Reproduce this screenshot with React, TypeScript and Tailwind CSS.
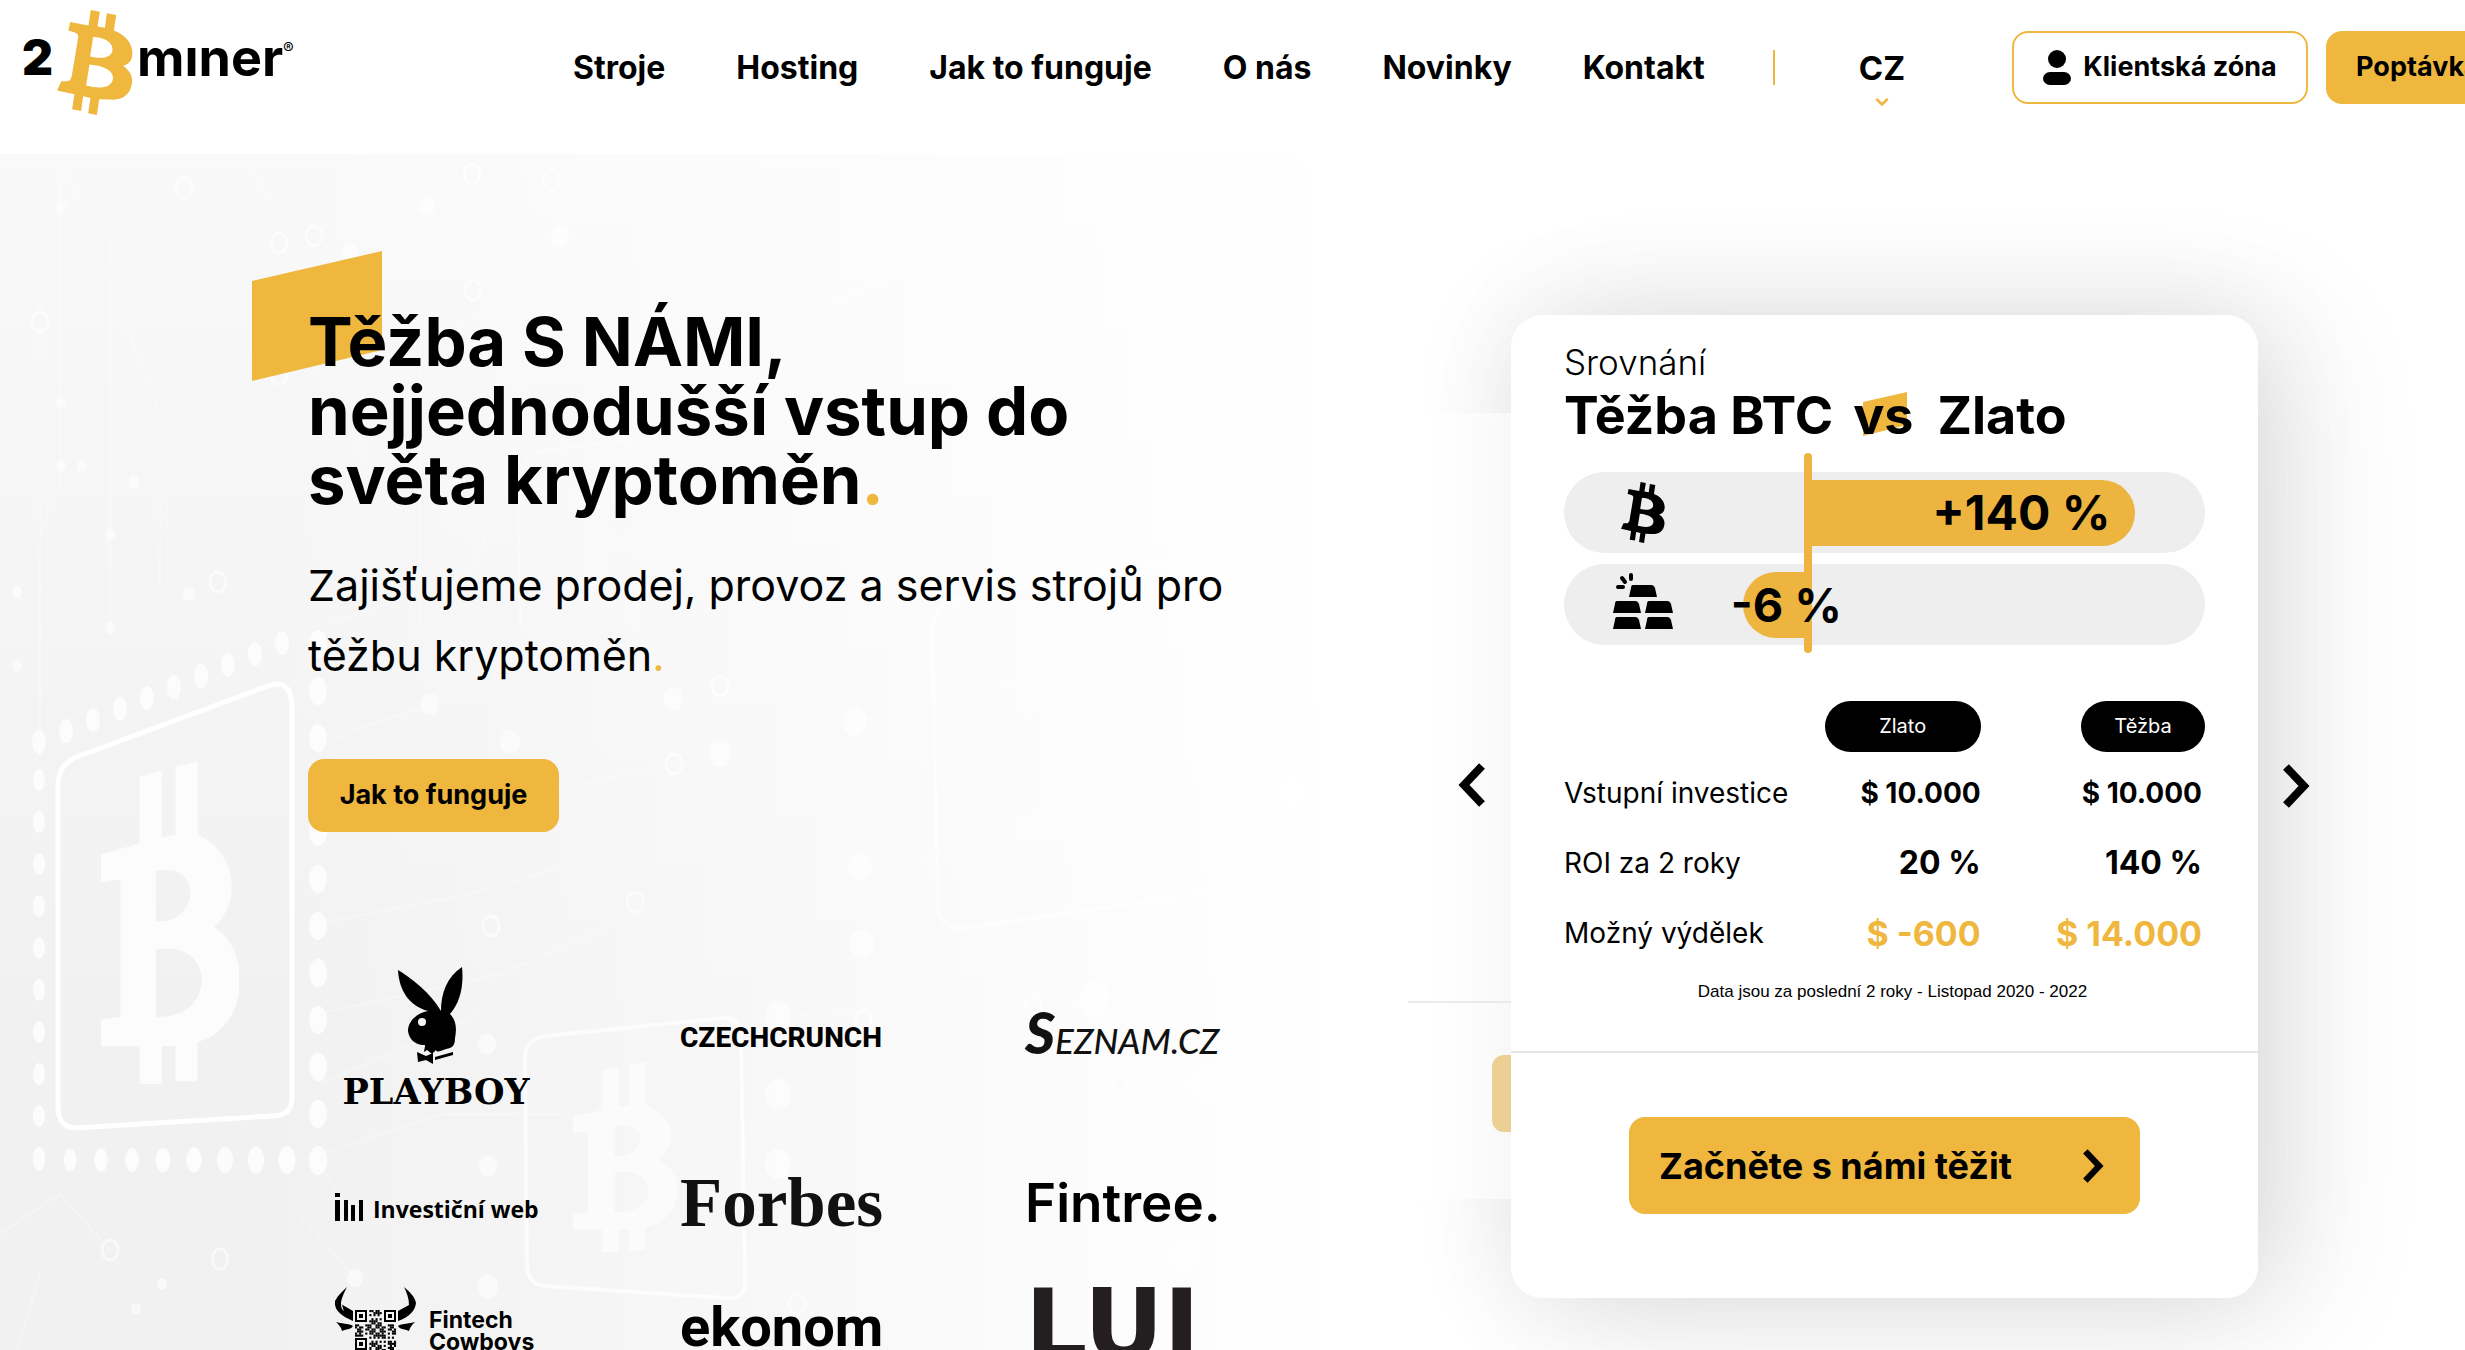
import { FiChevronDown } from "react-icons/fi";

const NAV_ITEMS = ["Stroje", "Hosting", "Jak to funguje", "O nás", "Novinky", "Kontakt"];

const COMPARISON = [
    { label: "Vstupní investice", gold: "$ 10.000", mining: "$ 10.000", style: "text-[28px] text-black" },
    { label: "ROI za 2 roky", gold: "20 %", mining: "140 %", style: "text-[32px] text-black" },
    { label: "Možný výdělek", gold: "$ -600", mining: "$ 14.000", style: "text-[34px] text-[#efb73e]" },
];

const B_PATH =
    "M179 93L184 67L239 77L246 31L273 36L266 80L288 84L294 41L322 46L315 92C352 106 373 134 370 166C368 184 360 192 342 198C362 212 372 228 369 250C364 285 340 302 300 299L271 298L264 345L238 340L245 294L223 289L217 333L190 328L197 283L145 272L158 244L172 244C182 244 187 238 189 228L208 115C210 104 206 98 179 93Z" +
    "M253 112C285 112 312 128 311 150C309 176 275 178 244 170ZM242 194C290 198 316 215 312 238C307 265 270 268 232 257Z";

function BitcoinMark({ className }: { className?: string }) {
    return (
        <svg viewBox="145 31 227 314" className={className} fill="currentColor" fillRule="evenodd" aria-hidden="true">
            <path d={B_PATH} />
        </svg>
    );
}

function Chevron({ className, left }: { className?: string; left?: boolean }) {
    return (
        <svg viewBox="0 0 27 44" className={className} fill="none" stroke="currentColor" strokeWidth="8" aria-hidden="true">
            <path d={left ? "M24 3L6 22L24 41" : "M3 3L21 22L3 41"} />
        </svg>
    );
}

// upright coin sign used inside the background chips
function ChipSign({ x, y, w, h, opacity }: { x: number; y: number; w: number; h: number; opacity: number }) {
    return (
        <svg x={x} y={y} width={w} height={h} viewBox="0 0 100 230" preserveAspectRatio="none" opacity={opacity}>
            <path
                fill="#fff"
                fillRule="evenodd"
                d="M0 66L28 58V10L44 6V54L54 52V3L70 0V52C96 62 104 98 82 118C110 134 108 190 70 200V228H54V203H44V230H28V203H0V184L14 182V84L0 86ZM40 78V114C72 116 74 70 40 78ZM40 134V182C84 184 84 126 40 134Z"
            />
        </svg>
    );
}

function Backdrop() {
    const left = Array.from({ length: 10 }, (_, i) => 626 + i * 42);
    const right = Array.from({ length: 12 }, (_, i) => 490 + i * 47);
    const top = Array.from({ length: 10 }, (_, i) => i);
    const scattered = [
        [61, 54, 5], [427, 52, 8], [560, 82, 9], [350, 98, 8], [61, 248, 5], [61, 312, 5], [134, 328, 6], [110, 380, 5],
        [82, 312, 5], [189, 440, 6], [110, 474, 5], [430, 550, 9], [510, 588, 10], [673, 545, 10], [720, 600, 11],
        [855, 568, 12], [860, 712, 12], [862, 790, 12], [487, 890, 9], [487, 935, 9], [778, 862, 13], [778, 940, 13],
        [778, 1010, 13], [488, 1012, 9], [488, 1132, 10], [355, 1124, 8], [162, 1130, 5], [136, 1155, 5], [1095, 845, 15],
        [1205, 930, 16], [1185, 1100, 14], [1340, 550, 15], [17, 438, 5], [17, 512, 5], [1290, 640, 12],
    ];
    const rings = [
        [184, 34], [472, 20], [551, 26], [279, 89], [314, 82], [473, 136], [279, 220], [218, 428], [720, 532], [674, 610],
        [635, 748], [491, 772], [863, 866], [1033, 850], [1120, 928], [220, 1105], [110, 1096], [40, 168], [797, 1150],
    ];
    const wires = [
        "M0 640L40 600V120", "M60 0V330L40 380V588", "M110 50V480", "M318 1000L440 960H560", "M318 860L500 820L640 760",
        "M318 770L470 740L640 690", "M318 680L490 650L720 600", "M320 930L480 860", "M318 590L430 550L560 470",
        "M320 1010L350 1060H487", "M330 470L470 420L520 300V120", "M780 862L1100 850L1240 900", "M860 712L1010 690",
        "M855 568L1040 520L1300 400", "M61 0L160 260V430", "M560 82L500 150L420 190V470", "M0 1080L60 1040L110 1096",
        "M17 1196L40 1120", "M355 1124L300 1060", "M240 0L360 180V420", "M720 200L900 120L1100 160",
    ];
    return (
        <svg className="absolute left-0 top-0" width="1500" height="1196" viewBox="0 0 1500 1196" aria-hidden="true">
            <g fill="none" stroke="#fff" strokeWidth="2" opacity="0.3">
                {wires.map((d) => <path key={d} d={d} />)}
            </g>
            <g fill="#fff" opacity="0.8">
                {left.map((y) => <ellipse key={y} cx="39" cy={y} rx="6" ry="11" />)}
                {right.map((y) => <ellipse key={y} cx="318" cy={y} rx="9" ry="14" />)}
                {top.map((i) => <ellipse key={i} cx={39 + i * 27} cy={588 - i * 11} rx="7" ry="12" />)}
                {top.map((i) => <ellipse key={i} cx={39 + i * 31} cy="1006" rx={6 + i / 3} ry={11 + i / 3} />)}
            </g>
            <g fill="#fff" opacity="0.6">
                {scattered.map(([x, y, r]) => <ellipse key={`${x}-${y}`} cx={x} cy={y} rx={r} ry={r * 1.2} />)}
            </g>
            <g fill="none" stroke="#fff" strokeWidth="3">
                {rings.map(([x, y]) => <ellipse key={`${x}-${y}`} cx={x} cy={y} rx="8" ry="10" opacity="0.6" />)}
                <path strokeWidth="5" d="M74 604L268 532Q290 524 292 550V944Q292 962 272 962L76 974Q58 974 58 952V632Q58 612 74 604Z" />
                <path strokeWidth="4" opacity="0.7" d="M545 882L724 864Q740 864 741 882L745 1128Q745 1146 726 1144L545 1132Q528 1130 527 1112L525 902Q526 886 545 882Z" />
                <path strokeWidth="4" opacity="0.5" d="M955 446L1258 390Q1284 386 1285 412L1292 700Q1292 726 1266 730L966 774Q940 776 938 752L932 480Q932 452 955 446Z" />
                <path opacity="0.3" d="M520 470V330Q520 300 548 296L650 284" />
            </g>
            <ChipSign x={101} y={608} w={138} h={322} opacity={0.8} />
            <ChipSign x={573} y={908} w={104} h={190} opacity={0.6} />
            <ChipSign x={1018} y={470} w={165} h={240} opacity={0.4} />
            <ChipSign x={570} y={286} w={100} h={190} opacity={0.2} />
        </svg>
    );
}

function Header() {
    return (
        <header className="relative flex h-[154px] items-start whitespace-nowrap bg-white pl-[22px]">
            <a href="#" aria-label="2Bminer" className="flex w-[276px] shrink-0 items-start pt-2.5 text-black">
                <span className="pt-5 pr-1 text-[48px] leading-[56px] font-black">2</span>
                <BitcoinMark className="h-[105px] w-[76px] shrink-0 text-[#efb73e]" />
                <span className="pt-4 pl-1 text-[52px] leading-[64px] font-bold">mıner</span>
                <span className="pt-7 text-base leading-5">®</span>
            </a>
            <nav className="ml-[275px] flex shrink-0 gap-[71px] pt-12 text-[32px] leading-10 font-bold">
                {NAV_ITEMS.map((item) => <a key={item} href="#">{item}</a>)}
            </nav>
            <div className="mt-[50px] ml-[68px] h-[35px] w-0.5 shrink-0 bg-[#efb73e]" />
            <button className="ml-[84px] flex shrink-0 flex-col items-center pt-12 text-[33px] leading-10 font-bold">
                CZ
                <FiChevronDown className="mt-1 size-5 stroke-3 text-[#efb73e]" />
            </button>
            <a href="#" className="mt-[31px] ml-[107px] flex h-[73px] w-[296px] shrink-0 items-center justify-center gap-3 rounded-2xl border-2 border-[#efb73e] text-[27px] font-bold">
                <svg viewBox="0 0 28 36" className="h-9 w-7" aria-hidden="true">
                    <ellipse cx="14" cy="9" rx="9" ry="9" />
                    <rect y="22" width="28" height="13" rx="7" />
                </svg>
                Klientská zóna
            </a>
            <a href="#" className="mt-[31px] ml-[18px] flex h-[73px] w-[230px] shrink-0 items-center rounded-2xl bg-[#efb73e] pl-[30px] text-[27px] font-bold">
                Poptávka
            </a>
        </header>
    );
}

function PlayboyLogo() {
    return (
        <div className="flex h-[140px] flex-col items-center">
            <svg viewBox="0 0 66 100" className="mr-3 h-[100px] w-[66px] shrink-0" aria-hidden="true">
                <path d="M1 4C14 12 34 27 44 45C44 27 50 11 65 1C67 20 63 37 53 48C59 54 60 62 58 72C58 79 56 82 49 83C43 85 40 87 39 84L35 88L30 84L27 86C27 84 28 82 28 79C20 80 12 74 11 65C11 55 20 47 31 45C12 40 2 24 1 4Z" />
                <circle cx="25" cy="56" r="4" fill="#f3f3f3" />
                <path d="M20 86L29 90L36 87V98L29 94L21 96Z" />
                <path d="M38 91L56 86V89L38 94Z" />
            </svg>
            <span className="pt-1 font-['DejaVu_Serif'] text-[35px] leading-[44px] font-bold">PLAYBOY</span>
        </div>
    );
}

function InvesticniLogo() {
    return (
        <div className="flex items-end gap-2.5 pt-6">
            <svg viewBox="0 0 28 28" className="mb-1 h-7 w-7 shrink-0" aria-hidden="true">
                <rect width="5" height="4" />
                <rect y="7" width="5" height="21" />
                <rect x="9" y="7" width="4" height="21" />
                <rect x="16" y="12" width="4" height="16" />
                <rect x="24" y="7" width="4" height="21" />
            </svg>
            <span className="font-['Open_Sans'] text-[23px] leading-8 font-bold whitespace-nowrap">Investiční web</span>
        </div>
    );
}

function CowboysLogo() {
    const cells = Array.from({ length: 400 }, (_, i) => i).filter((i) => {
        const x = i % 20;
        const y = Math.floor(i / 20);
        if (y < 7 && (x < 7 || x > 12)) return false;
        if (y > 12 && x < 7) return false;
        return (x * 7 + y * 13 + x * y * 5) % 11 < 6;
    });
    return (
        <div className="flex w-full gap-3">
            <svg viewBox="0 0 82 90" className="h-[90px] w-[82px] shrink-0" aria-hidden="true">
                <path d="M12 0C8 8 4 16 7 22L18 34V24L6 17L18 27L18 34C4 28 -1 22 0 14C3 8 8 4 12 0Z" />
                <path d="M7 18L18 25V34L10 28Z" />
                <path d="M69 0C75 5 80 10 81 16C80 24 74 30 63 34V24L74 18C74 12 72 6 69 0Z" />
                <path d="M1 35C6 37 14 36 18 39C16 43 10 42 7 44C6 40 4 38 1 35ZM80 35C75 37 67 36 63 39C65 43 71 42 74 44C75 40 77 38 80 35Z" />
                <g transform="translate(20 23)">
                    {cells.map((i) => <rect key={i} x={(i % 20) * 2.05} y={Math.floor(i / 20) * 2.05} width="2.1" height="2.1" />)}
                    {[[0, 0], [29, 0], [0, 28]].map(([x, y]) => (
                        <g key={`${x}-${y}`}>
                            <rect x={x + 1} y={y + 1} width="10" height="10" fill="none" stroke="#000" strokeWidth="2" />
                            <rect x={x + 4} y={y + 4} width="4" height="4" />
                        </g>
                    ))}
                </g>
            </svg>
            <span className="pt-[22px] text-[23px] leading-[22px] font-bold">Fintech<br />Cowboys</span>
        </div>
    );
}

function Logos() {
    return (
        <div className="mt-[134px] grid w-[920px] grid-cols-[202px_202px_202px] grid-rows-[140px_101px_auto] items-center gap-x-[143px] gap-y-10 pl-[27px] whitespace-nowrap text-black">
            <PlayboyLogo />
            <span className="pt-1 font-['Roboto'] text-[28px] leading-10 font-extrabold">CZECHCRUNCH</span>
            <span className="flex items-baseline text-[#111] italic">
                <span className="font-['Lato'] text-[58px] leading-10 font-black">S</span>
                <span className="font-['Lato'] text-[35px] leading-10 font-medium">EZNAM.CZ</span>
            </span>
            <InvesticniLogo />
            <span className="pt-3 font-['Liberation_Serif'] text-[69px] leading-[80px] font-bold text-[#111]">Forbes</span>
            <span className="pt-3 text-[53px] leading-[60px] font-semibold">Fintree.</span>
            <CowboysLogo />
            <span className="self-start font-['Roboto'] text-[56px] leading-[80px] font-bold">ekonom</span>
            <span className="self-start font-['DejaVu_Sans'] text-[98px] leading-[76px] font-bold text-[#231f20]">LUI</span>
        </div>
    );
}

function Chart() {
    return (
        <div className="relative mt-[7px] flex flex-col gap-[11px] pt-[19px] pb-2">
            <div className="relative flex h-[81px] items-center rounded-full bg-[#eeeeee] pl-[57px]">
                <BitcoinMark className="h-[61px] w-11" />
                <div className="absolute right-[11%] left-[38%] flex h-[66px] items-center justify-end rounded-r-full bg-[#edb53f] pr-6 text-[48px] font-bold">
                    +140 %
                </div>
            </div>
            <div className="relative flex h-[81px] items-center rounded-full bg-[#eeeeee] pl-[49px]">
                <svg viewBox="0 0 60 56" className="mb-2 h-14 w-[60px]" aria-hidden="true">
                    <path d="M20 12H38Q41 12 42 15L44 24H16L18 15Q18 12 20 12ZM4 28H22Q25 28 26 31L28 40H0L2 31Q2 28 4 28ZM36 28H54Q57 28 58 31L60 40H32L34 31Q34 28 36 28ZM4 44H22Q25 44 26 47L28 56H0L2 47Q2 44 4 44ZM36 44H54Q57 44 58 47L60 56H32L34 47Q34 44 36 44Z" />
                    <path d="M18 2V6M9 5L12 9M5 14H10" stroke="#000" strokeWidth="4" strokeLinecap="round" />
                </svg>
                <div className="absolute left-[28%] h-[66px] w-[10%] rounded-l-full bg-[#edb53f]" />
            </div>
            <div className="absolute inset-y-0 left-[37.5%] w-2 rounded-full bg-[#edb53f]" />
            <span className="absolute bottom-2 left-[26%] text-[47px] leading-[81px] font-bold">-6 %</span>
        </div>
    );
}

function CompareCard() {
    return (
        <article className="relative flex h-[983px] flex-col rounded-[32px] bg-white pt-[27px]">
            <div className="px-[53px]">
                <p className="text-[35px] leading-10 font-light">Srovnání</p>
                <h2 className="mt-1 flex text-[52px] leading-[60px] font-bold whitespace-nowrap">
                    Těžba BTC
                    <span className="relative mr-6 ml-5">
                        <svg viewBox="0 0 44 44" className="absolute top-1.5 left-2.5 size-11" fill="#efb73e" aria-hidden="true">
                            <path d="M0 10L44 0V33L0 44Z" />
                        </svg>
                        <span className="relative">vs</span>
                    </span>
                    Zlato
                </h2>
                <Chart />
                <table className="mt-12 w-full whitespace-nowrap">
                    <thead>
                        <tr className="h-[57px] align-top text-xl text-white">
                            <td />
                            <th scope="col" className="p-0 font-normal">
                                <span className="ml-auto block w-[156px] rounded-full bg-black text-center leading-[51px]">Zlato</span>
                            </th>
                            <th scope="col" className="p-0 font-normal">
                                <span className="ml-auto block w-[124px] rounded-full bg-black text-center leading-[51px]">Těžba</span>
                            </th>
                        </tr>
                    </thead>
                    <tbody>
                        {COMPARISON.map((row) => (
                            <tr key={row.label} className="h-[70px]">
                                <th scope="row" className="w-[40%] p-0 text-left text-[28px] font-normal">{row.label}</th>
                                <td className={`p-0 text-right font-bold ${row.style}`}>{row.gold}</td>
                                <td className={`w-[35%] p-0 pr-[3px] text-right font-bold ${row.style}`}>{row.mining}</td>
                            </tr>
                        ))}
                    </tbody>
                </table>
                <p className="mt-3 pl-4 text-center font-['Liberation_Sans'] text-[17px] leading-6">Data jsou za poslední 2 roky - Listopad 2020 - 2022</p>
            </div>
            <div className="mt-[47px] border-t-2 border-[#e6e6e6] px-[118px] pt-[64px]">
                <button className="flex h-[97px] w-full items-center justify-between rounded-2xl bg-[#efb73e] pr-9 pl-[30px] text-[36px] font-bold whitespace-nowrap">
                    Začněte s námi těžit
                    <Chevron className="h-[34px] w-[21px]" />
                </button>
            </div>
        </article>
    );
}

function Carousel() {
    return (
        <section className="relative mt-[161px] w-[747px] shrink-0">
            <div className="absolute inset-0 rounded-[32px] shadow-[0_0_110px_rgba(0,0,0,0.09),40px_10px_140px_rgba(0,0,0,0.09)]" />
            <div className="absolute top-[98px] -left-[103px] h-[786px] w-[400px] bg-white/60">
                <div className="mt-[588px] border-t-2 border-[#eaeaea]" />
                <div className="mt-[52px] ml-[84px] h-[77px] rounded-xl bg-[#ecd093]" />
            </div>
            <CompareCard />
            <button aria-label="Předchozí" className="absolute top-[448px] -left-[53px]">
                <Chevron left className="h-11 w-[27px]" />
            </button>
            <button aria-label="Další" className="absolute top-[449px] -right-[52px]">
                <Chevron className="h-11 w-[27px]" />
            </button>
        </section>
    );
}

export default function App() {
    return (
        <div className="h-screen overflow-hidden bg-white font-['Inter',sans-serif] text-black">
            <Header />
            <main className="relative flex items-start justify-between bg-[linear-gradient(to_right,transparent_10%,#ffffff_54%),linear-gradient(to_bottom,#f9f9f9,#f1f1f1_70%)] pr-[207px] pl-[308px]">
                <Backdrop />
                <section className="relative w-[940px] pt-[153px]">
                    <svg viewBox="0 0 130 130" className="absolute top-[97px] -left-14 size-[130px]" fill="#efb73e" aria-hidden="true">
                        <path d="M0 30L130 0V99L0 130Z" />
                    </svg>
                    <h1 className="relative text-[67px] leading-[69px] font-bold">
                        Těžba S NÁMI,<br />nejjednodušší vstup do<br />světa kryptoměn<span className="text-[#efb73e]">.</span>
                    </h1>
                    <p className="mt-9 text-[43px] leading-[70px]">
                        Zajišťujeme prodej, provoz a servis strojů pro<br />těžbu kryptoměn<span className="text-[#efb73e]">.</span>
                    </p>
                    <a href="#" className="mt-[69px] flex h-[73px] w-[251px] items-center justify-center rounded-2xl bg-[#efb73e] text-[27px] font-bold">
                        Jak to funguje
                    </a>
                    <Logos />
                </section>
                <Carousel />
            </main>
        </div>
    );
}
